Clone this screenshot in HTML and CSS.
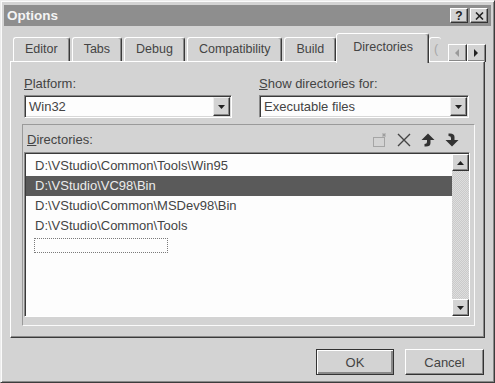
FILE: index.html
```html
<!DOCTYPE html>
<html lang="en">
<head>
  <meta charset="UTF-8" />
  <title>Options</title>
  <link rel="stylesheet" href="styles.css">
</head>
<body>

  <div class="window">

    <!-- Title bar -->
    <div class="titlebar">
      <span class="title">Options</span>
      <div class="controls">
        <span class="ctl">?</span>
        <span class="ctl">
          <svg width="9" height="8" viewBox="0 0 9 8"><path d="M1 0.5 L8 7.5 M8 0.5 L1 7.5" stroke="#222" stroke-width="1.6"/></svg>
        </span>
      </div>
    </div>

    <!-- Tabs -->
    <div class="tabs">
      <div class="tab">Editor</div>
      <div class="tab">Tabs</div>
      <div class="tab">Debug</div>
      <div class="tab">Compatibility</div>
      <div class="tab">Build</div>
      <div class="tab active">Directories</div>
      <div class="tab partial">(</div>
      <div class="tab-scroll">
        <span class="sbtn">
          <svg width="5" height="8" viewBox="0 0 5 8"><path d="M4 0 L0 4 L4 8 Z" fill="#9a9a9a"/></svg>
        </span>
        <span class="sbtn">
          <svg width="5" height="8" viewBox="0 0 5 8"><path d="M0 0 L4 4 L0 8 Z" fill="#222"/></svg>
        </span>
      </div>
    </div>

    <!-- Tab page -->
    <div class="panel">
      <div class="combos">
        <div class="field">
          <div class="label"><u>P</u>latform:</div>
          <div class="combo">
            <span class="combo-text">Win32</span>
            <span class="drop">
              <svg width="7" height="4" viewBox="0 0 7 4"><path d="M0 0 L7 0 L3.5 4 Z" fill="#222"/></svg>
            </span>
          </div>
        </div>
        <div class="field">
          <div class="label"><u>S</u>how directories for:</div>
          <div class="combo">
            <span class="combo-text">Executable files</span>
            <span class="drop">
              <svg width="7" height="4" viewBox="0 0 7 4"><path d="M0 0 L7 0 L3.5 4 Z" fill="#222"/></svg>
            </span>
          </div>
        </div>
      </div>

      <div class="group">
        <div class="group-head">
          <span><u>D</u>irectories:</span>
          <div class="tools">
            <svg class="tool" width="16" height="16" viewBox="0 0 16 16">
              <rect x="1.5" y="5.5" width="11" height="9" fill="none" stroke="#777" stroke-dasharray="1 1"/>
              <path d="M12 1 V5 M10 3 H14 M10.5 1.5 L13.5 4.5 M13.5 1.5 L10.5 4.5" stroke="#999" stroke-width="0.8"/>
            </svg>
            <svg class="tool" width="16" height="16" viewBox="0 0 16 16">
              <path d="M2 2 L14 14 M14 2 L2 14" stroke="#444" stroke-width="1.4"/>
            </svg>
            <svg class="tool" width="16" height="16" viewBox="0 0 16 16">
              <path d="M8 1.5 L14.5 8 L10.5 8 L10.5 11 Q10.5 14.5 6 14.5 L4.5 14.5 L4.5 12 Q7 12 7 10 L7 8 L1.5 8 Z" fill="#333"/>
            </svg>
            <svg class="tool" width="16" height="16" viewBox="0 0 16 16">
              <path d="M8 14.5 L14.5 8 L10.5 8 L10.5 5 Q10.5 1.5 6 1.5 L4.5 1.5 L4.5 4 Q7 4 7 6 L7 8 L1.5 8 Z" fill="#333"/>
            </svg>
          </div>
        </div>

        <div class="list">
          <div class="items">
            <div class="item">D:\VStudio\Common\Tools\Win95</div>
            <div class="item selected">D:\VStudio\VC98\Bin</div>
            <div class="item">D:\VStudio\Common\MSDev98\Bin</div>
            <div class="item">D:\VStudio\Common\Tools</div>
            <div class="new-entry"></div>
          </div>
          <div class="scrollbar">
            <span class="sbtn arrow">
              <svg width="7" height="4" viewBox="0 0 7 4"><path d="M0 4 L7 4 L3.5 0 Z" fill="#222"/></svg>
            </span>
            <span class="track"></span>
            <span class="sbtn arrow">
              <svg width="7" height="4" viewBox="0 0 7 4"><path d="M0 0 L7 0 L3.5 4 Z" fill="#222"/></svg>
            </span>
          </div>
        </div>
      </div>
    </div>

    <!-- Buttons -->
    <div class="buttons">
      <button class="btn default">OK</button>
      <button class="btn">Cancel</button>
    </div>

  </div>

</body>
</html>
```

FILE: styles.css
```css
* {
  margin: 0;
  padding: 0;
  box-sizing: border-box;
}

html, body {
  width: 495px;
  height: 383px;
  background: #d3d3d3;
  font-family: "Liberation Sans", Arial, sans-serif;
  font-size: 13px;
  color: #444;
}

/* Window frame */
.window {
  width: 495px;
  height: 383px;
  padding: 4px 3px 3px;
  border: 1px solid;
  border-color: #ececec #3c3c3c #3c3c3c #ececec;
  box-shadow: inset 1px 1px #fafafa, inset -1px -1px #8a8a8a;
  display: flex;
  flex-direction: column;
}

/* Title bar */
.titlebar {
  height: 21px;
  background: #8e8e8e;
  display: flex;
  align-items: center;
  justify-content: space-between;
  padding: 0 3px;
}

.title {
  color: #f4f4f4;
  font-weight: bold;
  font-size: 13.5px;
}

.controls {
  display: flex;
  gap: 2px;
}

.ctl {
  width: 18px;
  height: 15px;
  background: #d3d3d3;
  border: 1px solid;
  border-color: #fff #333 #333 #fff;
  box-shadow: inset -1px -1px #888;
  display: flex;
  align-items: center;
  justify-content: center;
  font-weight: bold;
  font-size: 12px;
  color: #222;
}

/* Tabs */
.tabs {
  display: flex;
  align-items: flex-end;
  height: 28px;
  margin-top: 7px;
  padding-left: 9px;
}

.tab {
  height: 24px;
  padding: 4px 11px 0;
  margin-right: 2px;
  font-size: 12.5px;
  white-space: nowrap;
  border: 1px solid;
  border-bottom: none;
  border-color: #fff #3a3a3a #fff #fff;
  border-radius: 3px 3px 0 0;
  box-shadow: inset -1px 0 #8a8a8a;
}

.tab.active {
  height: 30px;
  padding: 6px 15px 0 16px;
  margin: 0 0 -2px -2px;
  position: relative;
  z-index: 1;
  background: #d3d3d3;
}

.tab.partial {
  width: 12px;
  padding: 4px 0 0 4px;
  overflow: hidden;
  color: #a8a8a8;
  border-right: none;
  box-shadow: none;
}

.tab-scroll {
  display: flex;
  margin-left: auto;
  margin-right: 5px;
  margin-bottom: -1px;
}

.sbtn {
  width: 19px;
  height: 18px;
  background: #d3d3d3;
  border: 1px solid;
  border-color: #fff #333 #333 #fff;
  box-shadow: inset -1px -1px #888;
  display: flex;
  align-items: center;
  justify-content: center;
}

/* Tab page */
.panel {
  height: 277px;
  margin: 0 6px;
  border: 1px solid;
  border-color: #fff #3a3a3a #3a3a3a #fff;
  box-shadow: inset -1px -1px #8a8a8a;
  padding: 14px 9px 0 11px;
}

.combos {
  display: grid;
  grid-template-columns: 208px 210px;
  gap: 27px;
  padding: 0 6px 0 2px;
}

.label {
  line-height: 16px;
  margin-bottom: 3px;
}

.combo {
  height: 23px;
  display: flex;
  align-items: stretch;
  padding: 1px;
  background: #fdfdfd;
  border: 1px solid;
  border-color: #8a8a8a #fff #fff #8a8a8a;
  box-shadow: inset 1px 1px #3a3a3a, inset -1px -1px #d8d8d8;
}

.combo-text {
  flex: 1;
  padding-left: 3px;
  line-height: 19px;
}

.drop {
  width: 17px;
  background: #d3d3d3;
  border: 1px solid;
  border-color: #eee #333 #333 #eee;
  box-shadow: inset -1px -1px #888;
  display: flex;
  align-items: center;
  justify-content: center;
}

/* Directories box */
.group {
  margin-top: 6px;
  height: 202px;
  border: 1px solid;
  border-color: #9a9a9a #fafafa #fafafa #9a9a9a;
  display: flex;
  flex-direction: column;
}

.group-head {
  height: 27px;
  display: flex;
  align-items: center;
  justify-content: space-between;
  padding: 2px 14px 0 4px;
}

.tools {
  display: flex;
  gap: 8px;
}

.list {
  flex: 1;
  margin: 0 4px 8px 1px;
  display: flex;
  background: #fdfdfd;
  border: 1px solid;
  border-color: #8a8a8a #fff #fff #8a8a8a;
  box-shadow: inset 1px 1px #3a3a3a;
  padding: 1px 0 0 1px;
}

.items {
  flex: 1;
  padding-top: 2px;
}

.item {
  height: 20px;
  line-height: 20px;
  padding-left: 9px;
  white-space: nowrap;
}

.item.selected {
  background: #5a5a5a;
  color: #ececec;
}

.new-entry {
  width: 134px;
  height: 15px;
  margin: 2px 0 0 8px;
  border: 1px dotted #7a7a7a;
}

.scrollbar {
  width: 17px;
  display: flex;
  flex-direction: column;
}

.sbtn.arrow {
  width: 17px;
  height: 17px;
}

.track {
  flex: 1;
  background: repeating-conic-gradient(#dedede 0 25%, #cacaca 0 50%) 0 0 / 2px 2px;
}

/* Bottom buttons */
.buttons {
  display: flex;
  justify-content: flex-end;
  gap: 11px;
  margin-top: 11px;
  padding-right: 7px;
}

.btn {
  width: 79px;
  height: 26px;
  font-family: "Liberation Sans", Arial, sans-serif;
  font-size: 13px;
  color: #444;
  background: #d3d3d3;
  border: 1px solid;
  border-color: #fff #333 #333 #fff;
  box-shadow: inset -1px -1px #888;
}

.btn.default {
  width: 78px;
  border-color: #333;
  box-shadow: inset 1px 1px #fff, inset -2px -2px #888;
}
```
